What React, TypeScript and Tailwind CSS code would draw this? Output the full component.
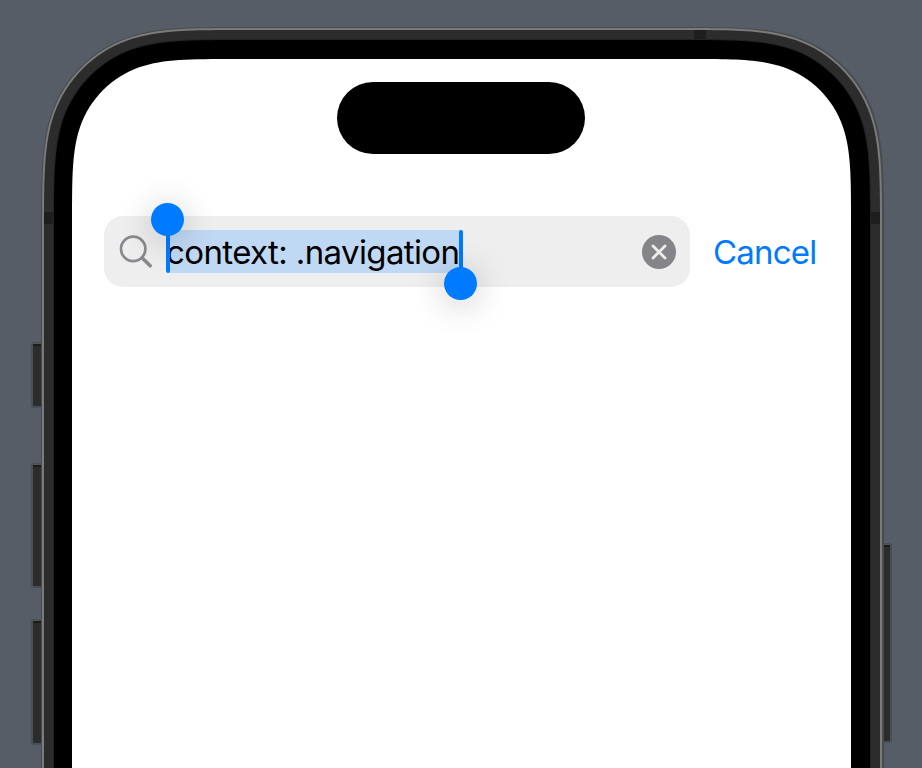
import type { ReactNode } from "react";

// Outline with continuous-curvature top corners and a straight bottom edge.
function smoothTop(w: number, h: number, r: number) {
  const a = 1.52866483 * r, b = 1.08849296 * r, c = 0.855 * r;
  const d = 0.63149399 * r, e = 0.07491139 * r, f = 0.37282392 * r, g = 0.164 * r;
  return `path("M${a} 0L${w - a} 0C${w - b} 0 ${w - c} 0 ${w - d} ${e}C${w - f} ${g} ${w - g} ${f} ${w - e} ${d}C${w} ${c} ${w} ${b} ${w} ${a}L${w} ${h}L0 ${h}L0 ${a}C0 ${b} 0 ${c} ${e} ${d}C${g} ${f} ${f} ${g} ${d} ${e}C${c} 0 ${b} 0 ${a} 0Z")`;
}

function Layer({ w, r, className, children }: { w: number; r: number; className: string; children?: ReactNode }) {
  return (
    <div className={className} style={{ clipPath: smoothTop(w, 900, r) }}>
      {children}
    </div>
  );
}

function SideButton({ className }: { className: string }) {
  return (
    <div className={`shrink-0 border-2 border-[#4a4f55] bg-[#2c2c2c] ${className}`}>
      <div className="-mt-px h-px bg-[#555552]" />
      <div className="h-[2px] bg-[#1c1c1c]" />
    </div>
  );
}

function Island() {
  return <div className="mr-px h-[72.5px] w-[248px] shrink-0 rounded-full bg-black" />;
}

function Knob({ className }: { className: string }) {
  return (
    <div className={`absolute size-[33px] rounded-full bg-[#007aff] shadow-[0_4px_34px_rgba(0,0,0,0.24)] ${className}`} />
  );
}

function SearchRow() {
  return (
    <div className="flex w-full items-center gap-[23px] pl-8">
      <div className="flex h-[71px] w-[586px] shrink-0 items-center justify-between rounded-[19px] bg-[#eeeeee] pl-[14.5px] pr-[14px]">
        <div className="flex items-center gap-[13px]">
          <svg className="size-9 shrink-0" viewBox="0 0 36 36" fill="none" stroke="#8a8a8e" strokeLinecap="round">
            <circle cx="14.2" cy="14.9" r="12.2" strokeWidth="2.7" />
            <path d="M23.5 24.2L31.2 31.8" strokeWidth="3.6" />
          </svg>
          <div className="relative h-[43px] w-[293px] bg-[#bfd8f3]">
            <span className="-ml-[1.5px] block whitespace-nowrap text-[33px] leading-[45px] tracking-[-0.62px] text-black">
              context: .navigation
            </span>
            <div className="absolute inset-y-0 -left-0.5 w-1 rounded-b-full bg-[#007aff]" />
            <Knob className="-left-[16.5px] -top-[27px]" />
            <div className="absolute inset-y-0 -right-0.5 w-1 rounded-t-full bg-[#007aff]" />
            <Knob className="-bottom-[27px] -right-[16.5px]" />
          </div>
        </div>
        <svg className="size-[34px] shrink-0" viewBox="0 0 34 34" fill="none">
          <circle cx="17" cy="17" r="17" fill="#858589" />
          <path d="M11 11L23 23M23 11L11 23" stroke="#eeeeee" strokeWidth="2.8" strokeLinecap="round" />
        </svg>
      </div>
      <span className="whitespace-nowrap text-[33px] leading-[46px] tracking-[-0.8px] text-[#007aff]">Cancel</span>
    </div>
  );
}

export default function App() {
  return (
    <main className="flex h-[768px] w-[922px] items-start overflow-hidden bg-[#565d66] pl-[31px] font-[Inter,'Liberation_Sans',sans-serif]">
      <div className="flex w-[11px] shrink-0 flex-col pt-[342px]">
        <SideButton className="h-[66px] rounded-l-[3px] border-r-0" />
        <SideButton className="mt-[55px] h-[125px] rounded-l-[3px] border-r-0" />
        <SideButton className="mt-[31px] h-[126px] rounded-l-[3px] border-r-0" />
      </div>
      <div className="-mx-px shrink-0 pt-[27px]">
        <Layer w={843} r={137} className="h-[900px] w-[843px] bg-[#484c51] pl-px pt-px">
          <Layer w={840} r={136} className="h-[900px] w-[840px] bg-[#7b7b7a] pl-[2px] pt-[2px]">
            <Layer w={836} r={134} className="relative h-[900px] w-[836px] bg-[#2c2c2c] pl-[9px] pt-[9px]">
              <div className="absolute left-[650px] top-0 h-[10px] w-3 bg-[#1e1e1e]" />
              <div className="absolute left-0 top-[182px] h-3 w-full bg-[#1e1e1e]" />
              <Layer w={818} r={126} className="relative h-[900px] w-[818px] bg-[#232323] pl-px pt-px">
                <Layer w={816} r={125} className="h-[900px] w-[816px] bg-black pl-[18px] pt-[19px]">
                  <Layer w={779} r={107.5} className="flex h-[900px] w-[779px] flex-col items-center gap-[62px] bg-white pt-[22.5px]">
                    <Island />
                    <SearchRow />
                  </Layer>
                </Layer>
              </Layer>
            </Layer>
          </Layer>
        </Layer>
      </div>
      <div className="flex w-[9px] shrink-0 flex-col pt-[543px]">
        <SideButton className="h-[200px] rounded-r-[3px] border-l-0" />
      </div>
    </main>
  );
}
